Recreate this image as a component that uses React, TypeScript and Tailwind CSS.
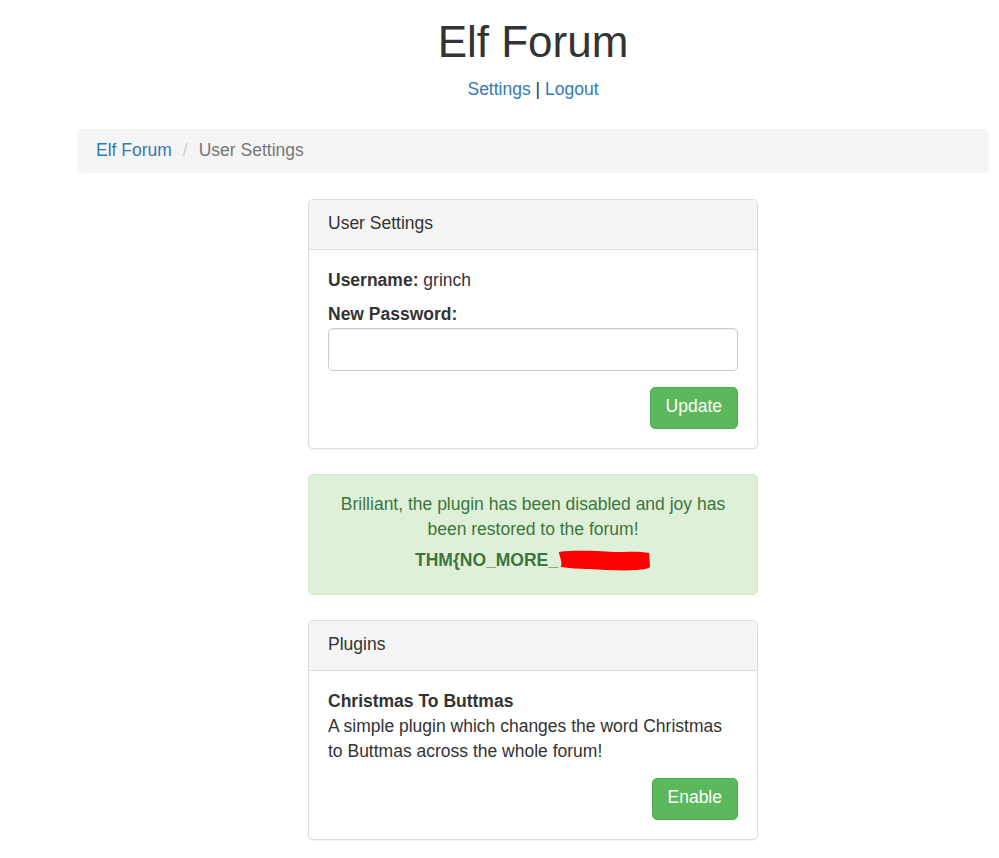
import React from 'react';

const Panel = ({ title, children }: { title: string; children: React.ReactNode }) => (
  <div className="w-[450px] rounded-[5px] border border-[#ddd] bg-white shadow-[0_1px_1px_rgba(0,0,0,0.05)]">
    <div className="rounded-t-[5px] border-b border-[#ddd] bg-[#f5f5f5] px-[19px] pt-[11px] pb-[13px] leading-[25px]">
      {title}
    </div>
    <div className="px-[19px] pt-[18px] pb-[19px]">{children}</div>
  </div>
);

const Button = ({ label }: { label: string }) => (
  <button className="rounded-[5px] border border-[#4cae4c] bg-[#5cb85c] px-[15px] pt-[6px] pb-[9px] leading-[25px] text-white">
    {label}
  </button>
);

export default function App() {
  return (
    <div
      className="min-h-screen bg-white pr-[10px] pl-[77px] text-[17.5px] leading-[25px] text-[#333]"
      style={{ fontFamily: '"Liberation Sans", Arial, sans-serif' }}
    >
      {/* Header */}
      <div className="pt-[18px] text-center">
        <h1 className="text-[44px] leading-[48px] font-normal">Elf Forum</h1>
        <div className="mt-[11px] leading-[24px]">
          <a className="text-[#337ab7]">Settings</a> | <a className="text-[#337ab7]">Logout</a>
        </div>
      </div>

      {/* Breadcrumb */}
      <div className="mt-[28px] flex items-center rounded-[5px] bg-[#f5f5f5] px-[19px] pt-[9px] pb-[11px] leading-[24px]">
        <a className="text-[#337ab7]">Elf Forum</a>
        <span className="px-[11px] text-[#ccc]">/</span>
        <span className="text-[#777]">User Settings</span>
      </div>

      <div className="mt-[26px] flex flex-col items-center">
        <Panel title="User Settings">
          <div>
            <b>Username:</b> grinch
          </div>
          <div className="mt-[9px] font-bold">New Password:</div>
          <input
            type="password"
            className="mt-[1px] block h-[43px] w-full rounded-[5px] border border-[#ccc] px-[15px] shadow-[inset_0_1px_1px_rgba(0,0,0,0.075)] outline-none"
          />
          <div className="mt-[16px] flex justify-end">
            <Button label="Update" />
          </div>
        </Panel>

        {/* Alert */}
        <div className="mt-[25px] w-[450px] rounded-[5px] border border-[#d6e9c6] bg-[#dff0d8] px-[19px] pt-[17px] pb-[21px] text-center text-[#3c763d]">
          <p>Brilliant, the plugin has been disabled and joy has been restored to the forum!</p>
          <p className="mt-[6px] flex items-center justify-center font-bold">
            <span>THM{'{'}NO_MORE_</span>
            <svg width="94" height="24" viewBox="0 0 100 24" preserveAspectRatio="none" className="-ml-[1px]">
              <path
                d="M2 3 C20 1 40 2 60 3 C75 3 88 2 98 4 L99 18 C95 21 90 20 85 21 C70 22 50 21 35 20 C22 20 12 19 4 18 C6 13 3 9 2 3 Z"
                fill="#ff0000"
              />
            </svg>
          </p>
        </div>

        <div className="mt-[25px] mb-[18px]">
          <Panel title="Plugins">
            <div className="font-bold">Christmas To Buttmas</div>
            <div>A simple plugin which changes the word Christmas to Buttmas across the whole forum!</div>
            <div className="mt-[14px] flex justify-end">
              <Button label="Enable" />
            </div>
          </Panel>
        </div>
      </div>
    </div>
  );
}
